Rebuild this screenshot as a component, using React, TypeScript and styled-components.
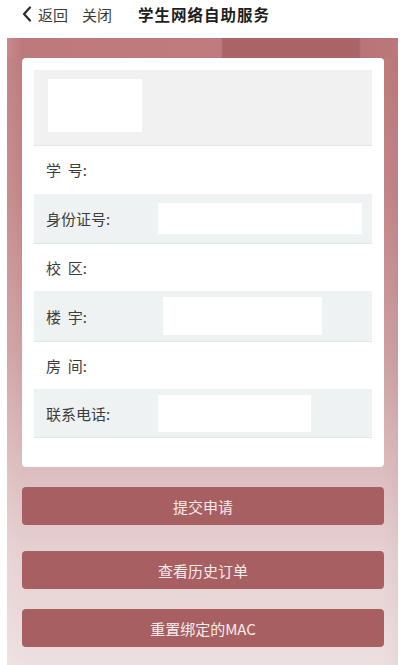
import React from "react";
import styled, { createGlobalStyle } from "styled-components";

const Global = createGlobalStyle`
  html, body { margin: 0; padding: 0; background: #ffffff; }
  body { font-family: "Noto Sans CJK SC", "Noto Sans", sans-serif; }
  * { box-sizing: border-box; }
`;

const Page = styled.div`
  width: 404px;
  height: 665px;
  display: flex;
  flex-direction: column;
  overflow: hidden;
  background: #ffffff;
`;

const Header = styled.header`
  height: 38px;
  display: flex;
  align-items: center;
  padding: 0 0 10px 22px;
  color: #333;
  font-size: 15px;
`;

const NavItem = styled.span<{ $gap?: number }>`
  display: flex;
  align-items: center;
  margin-right: ${(p) => p.$gap ?? 0}px;
  color: #3a3a3a;
  line-height: 1;
`;

const Title = styled.span`
  font-size: 15.5px;
  font-weight: 700;
  color: #1e1e1e;
  letter-spacing: 1px;
`;

const Panel = styled.main`
  flex: 1;
  margin: 0 6px 0 7px;
  padding: 20px 14px 0 15px;
  display: flex;
  flex-direction: column;
  background:
    linear-gradient(to right, #c98a8c 0px, #bd7a7c 15px, #bf7b7d 214px, #aa6466 216px, #aa6466 352px, #b87577 354px, #bb7779 100%) top / 100% 20px no-repeat,
    linear-gradient(to right, rgba(255,255,255,0.08) 0, rgba(255,255,255,0) 15px, rgba(255,255,255,0) 376px, rgba(0,0,0,0.03) 100%),
    linear-gradient(to bottom, #bd7a7c 0%, #c38688 25%, #cea0a2 50%, #dcbcbe 68%, #e6d0d1 82%, #ede0e1 100%);
`;

const Card = styled.section`
  background: #ffffff;
  border-radius: 4px;
  padding: 12px 12px 29px 12px;
  display: flex;
  flex-direction: column;
`;

const PhotoRow = styled.div`
  height: 76px;
  background: #f1f1f1;
  border-bottom: 1px solid #e4e7e8;
  padding: 9px 0 0 14px;
`;

const PhotoBox = styled.div`
  width: 94px;
  height: 53px;
  background: #ffffff;
`;

const Row = styled.div<{ $shaded?: boolean; $h: number }>`
  height: ${(p) => p.$h}px;
  display: flex;
  align-items: center;
  padding-left: 12px;
  background: ${(p) => (p.$shaded ? "#eef2f3" : "#ffffff")};
  border-bottom: 1px solid ${(p) => (p.$shaded ? "#e2e6e8" : "#ffffff")};
`;

const Label = styled.span`
  width: 112px;
  flex: none;
  font-size: 15px;
  color: #3c3c3c;
  white-space: pre;
`;

const Field = styled.div<{ $offset: number; $w: number; $h: number }>`
  margin-left: ${(p) => p.$offset}px;
  width: ${(p) => p.$w}px;
  height: ${(p) => p.$h}px;
  background: #ffffff;
`;

const Buttons = styled.div`
  display: flex;
  flex-direction: column;
`;

const Button = styled.button<{ $top: number }>`
  margin-top: ${(p) => p.$top}px;
  height: 38px;
  width: 100%;
  border: none;
  border-radius: 4px;
  background: #a85f61;
  color: #f7ecec;
  font-family: "Noto Sans CJK SC", "Noto Sans", sans-serif;
  font-size: 15px;
  cursor: pointer;
`;

const Chevron = () => (
  <svg width="10" height="16" viewBox="0 0 10 16" style={{ marginRight: 6 }}>
    <path d="M8 1.5 L2 8 L8 14.5" fill="none" stroke="#2a2a2a" strokeWidth="2.2" strokeLinecap="round" strokeLinejoin="round" />
  </svg>
);

export default function App() {
  return (
    <Page>
      <Global />
      <Header>
        <NavItem $gap={14}>
          <Chevron />
          返回
        </NavItem>
        <NavItem $gap={26}>关闭</NavItem>
        <Title>学生网络自助服务</Title>
      </Header>
      <Panel>
        <Card>
          <PhotoRow>
            <PhotoBox />
          </PhotoRow>
          <Row $h={48}>
            <Label>{"学  号:"}</Label>
          </Row>
          <Row $shaded $h={50}>
            <Label>身份证号:</Label>
            <Field $offset={0} $w={204} $h={31} />
          </Row>
          <Row $h={47}>
            <Label>{"校  区:"}</Label>
          </Row>
          <Row $shaded $h={51}>
            <Label>{"楼  宇:"}</Label>
            <Field $offset={5} $w={159} $h={38} />
          </Row>
          <Row $h={47}>
            <Label>{"房  间:"}</Label>
          </Row>
          <Row $shaded $h={49}>
            <Label>联系电话:</Label>
            <Field $offset={0} $w={153} $h={37} />
          </Row>
        </Card>
        <Buttons>
          <Button $top={20}>提交申请</Button>
          <Button $top={26}>查看历史订单</Button>
          <Button $top={20}>重置绑定的MAC</Button>
        </Buttons>
      </Panel>
    </Page>
  );
}
